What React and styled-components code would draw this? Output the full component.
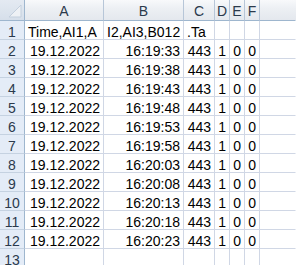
import React from "react";
import styled, { createGlobalStyle } from "styled-components";

const Global = createGlobalStyle`
  html, body { margin: 0; padding: 0; background: #ffffff; overflow: hidden; }
  #root { width: 296px; height: 265px; overflow: hidden; }
`;

const Sheet = styled.div`
  display: grid;
  grid-template-columns: 25px 79px 80px 31px 15px 15px 15px 1fr;
  grid-template-rows: 21px repeat(13, 19px);
  width: 296px;
  font-family: "Liberation Sans", Arial, sans-serif;
  font-size: 14px;
  background: #ffffff;
`;

const Corner = styled.div`
  box-sizing: border-box;
  border-right: 1px solid #9eb6ce;
  border-bottom: 1px solid #9eb6ce;
  background: linear-gradient(to bottom, #e4eaf2, #d6dfea);
  display: flex;
  align-items: flex-end;
  justify-content: flex-end;
  padding: 0 2px 2px 0;
`;

const ColHead = styled.div`
  box-sizing: border-box;
  border-right: 1px solid ${(p) => (p.$last ? "transparent" : "#b7c6d8")};
  border-bottom: 1px solid #9eb6ce;
  background: linear-gradient(to bottom, #f8f9fb 0%, #edf0f4 40%, #e4e8ee 100%);
  color: #2b3a4c;
  text-align: center;
  line-height: 18px;
  padding-top: 2px;
  overflow-x: clip;
`;

const RowHead = styled.div`
  box-sizing: border-box;
  border-right: 1px solid #9eb6ce;
  border-bottom: 1px solid #c5d2e1;
  background: #e4ecf7;
  color: #2b3a4c;
  text-align: center;
  line-height: 18px;
  padding-top: 2px;
  overflow-x: clip;
`;

const Cell = styled.div`
  box-sizing: border-box;
  border-right: 1px solid ${(p) => (p.$last ? "transparent" : "#d0d7e5")};
  border-bottom: 1px solid #d0d7e5;
  color: #000000;
  text-align: ${(p) => (p.$right ? "right" : "left")};
  line-height: 18px;
  padding: 2px 3px 0 3px;
  white-space: nowrap;
  overflow-x: clip;
`;

const cols = ["A", "B", "C", "D", "E", "F", ""];

const times = [
  "16:19:33",
  "16:19:38",
  "16:19:43",
  "16:19:48",
  "16:19:53",
  "16:19:58",
  "16:20:03",
  "16:20:08",
  "16:20:13",
  "16:20:18",
  "16:20:23",
];

const rows = [
  [
    { v: "Time,AI1,A" },
    { v: "I2,AI3,B012" },
    { v: ".Ta" },
    { v: "" },
    { v: "" },
    { v: "" },
    { v: "" },
  ],
  ...times.map((t) => [
    { v: "19.12.2022", r: true },
    { v: t, r: true },
    { v: "443", r: true },
    { v: "1", r: true },
    { v: "0", r: true },
    { v: "0", r: true },
    { v: "" },
  ]),
  [{ v: "" }, { v: "" }, { v: "" }, { v: "" }, { v: "" }, { v: "" }, { v: "" }],
];

export default function App() {
  return (
    <>
      <Global />
      <Sheet>
        <Corner>
          <svg width="13" height="13" viewBox="0 0 13 13">
            <polygon points="12,0 12,12 0,12" fill="#eef1f5" stroke="#c3cfdd" strokeWidth="1" />
          </svg>
        </Corner>
        {cols.map((c, i) => (
          <ColHead key={"h" + i} $last={i === cols.length - 1}>
            {c}
          </ColHead>
        ))}
        {rows.map((row, ri) => (
          <React.Fragment key={"r" + ri}>
            <RowHead>{ri + 1}</RowHead>
            {row.map((cell, ci) => (
              <Cell key={ci} $right={cell.r} $last={ci === row.length - 1}>
                {cell.v}
              </Cell>
            ))}
          </React.Fragment>
        ))}
      </Sheet>
    </>
  );
}
